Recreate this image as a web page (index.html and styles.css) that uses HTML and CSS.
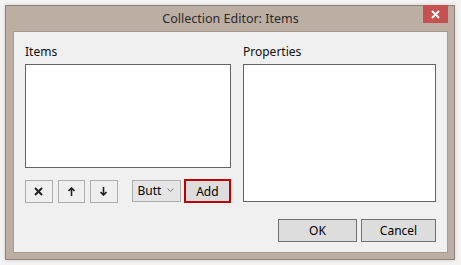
FILE: index.html
```html
<!DOCTYPE html>
<html>
<head>
  <title>Collection Editor: Items</title>
  <link rel="stylesheet" href="styles.css">
</head>
<body>
  <div class="window">
    <div class="titlebar">
      <span class="title">Collection Editor: Items</span>
      <button class="close" type="button">
        <svg width="9" height="9" viewBox="0 0 9 9"><path d="M1 1L8 8M8 1L1 8" stroke="#fff" stroke-width="2"/></svg>
      </button>
    </div>

    <div class="client">
      <div class="panes">
        <div class="pane items">
          <label class="label">Items</label>
          <div class="listbox"></div>
          <div class="tools">
            <button class="tool" type="button">
              <svg width="9" height="9" viewBox="0 0 9 9"><path d="M1 1L8 8M8 1L1 8" stroke="#222" stroke-width="2"/></svg>
            </button>
            <button class="tool" type="button">
              <svg width="7" height="9" viewBox="0 0 7 9"><path d="M3.5 9V2M0.5 4L3.5 1L6.5 4" stroke="#222" stroke-width="1.6" fill="none"/></svg>
            </button>
            <button class="tool" type="button">
              <svg width="7" height="9" viewBox="0 0 7 9"><path d="M3.5 0V7M0.5 5L3.5 8L6.5 5" stroke="#222" stroke-width="1.6" fill="none"/></svg>
            </button>
            <div class="combo">
              <span class="combo-text">Butt</span>
              <svg width="7" height="5" viewBox="0 0 7 5"><path d="M0.5 0.5L3.5 3.5L6.5 0.5" stroke="#777" stroke-width="1" fill="none"/></svg>
            </div>
            <button class="btn add" type="button">Add</button>
          </div>
        </div>

        <div class="pane props">
          <label class="label">Properties</label>
          <div class="listbox grid"></div>
        </div>
      </div>

      <div class="footer">
        <button class="btn ok" type="button">OK</button>
        <button class="btn cancel" type="button">Cancel</button>
      </div>
    </div>
  </div>
</body>
</html>
```

FILE: styles.css
```css
html, body {
  margin: 0;
  padding: 0;
}

body {
  background: #f3f3f3;
  font-family: 'Noto Sans', 'Open Sans', sans-serif;
  font-size: 12px;
  color: #000;
  padding: 5px;
  width: 461px;
  height: 265px;
  box-sizing: border-box;
}

button {
  font-family: inherit;
  font-size: 12px;
  margin: 0;
  padding: 0;
  color: #000;
}

.window {
  width: 450px;
  height: 255px;
  box-sizing: border-box;
  background: #bcaea3;
  border: 1px solid #8e8178;
  box-shadow: 0 0 4px rgba(0, 0, 0, 0.15);
  display: flex;
  flex-direction: column;
  padding: 0 6px 7px 7px;
}

.titlebar {
  height: 25px;
  flex: none;
  display: flex;
  justify-content: center;
  position: relative;
}

.title {
  font-size: 12.5px;
  color: #2b2b2b;
  line-height: 24px;
  margin-top: 1px;
}

.close {
  position: absolute;
  right: 0;
  top: -1px;
  width: 25px;
  height: 18px;
  border: none;
  background: #c75050;
  display: flex;
  align-items: center;
  justify-content: center;
}

.client {
  flex: 1;
  background: #f0f0f0;
  border: 1px solid #a89a8f;
  display: flex;
  flex-direction: column;
  padding: 12px 11px 10px 11px;
}

.panes {
  display: flex;
  gap: 12px;
}

.pane {
  display: flex;
  flex-direction: column;
}

.items {
  width: 206px;
}

.props {
  width: 193px;
}

.label {
  line-height: 16px;
  height: 16px;
  margin-bottom: 4px;
  color: #111;
}

.listbox {
  background: #fff;
  border: 1px solid #646464;
  height: 102px;
}

.listbox.grid {
  height: 136px;
}

.tools {
  display: flex;
  align-items: center;
  margin-top: 11px;
}

.tool {
  width: 28px;
  height: 23px;
  background: #efefef;
  border: 1px solid #adadad;
  margin-right: 5px;
  display: flex;
  align-items: center;
  justify-content: center;
}

.combo {
  margin-left: 9px;
  width: 50px;
  height: 22px;
  box-sizing: border-box;
  background: #e5e5e5;
  border: 1px solid #acacac;
  display: flex;
  align-items: center;
  justify-content: space-between;
  padding: 0 6px 2px 5px;
}

.combo-text {
  overflow: hidden;
  width: 26px;
  white-space: nowrap;
}

.btn {
  background: #dddddd;
  border: 1px solid #707070;
  height: 23px;
}

.add {
  margin-left: 3px;
  width: 48px;
  height: 24px;
  border: 2px solid #c00000;
}

.footer {
  display: flex;
  justify-content: flex-end;
  gap: 4px;
  margin-top: 16px;
}

.ok {
  width: 79px;
}

.cancel {
  width: 75px;
}
```
